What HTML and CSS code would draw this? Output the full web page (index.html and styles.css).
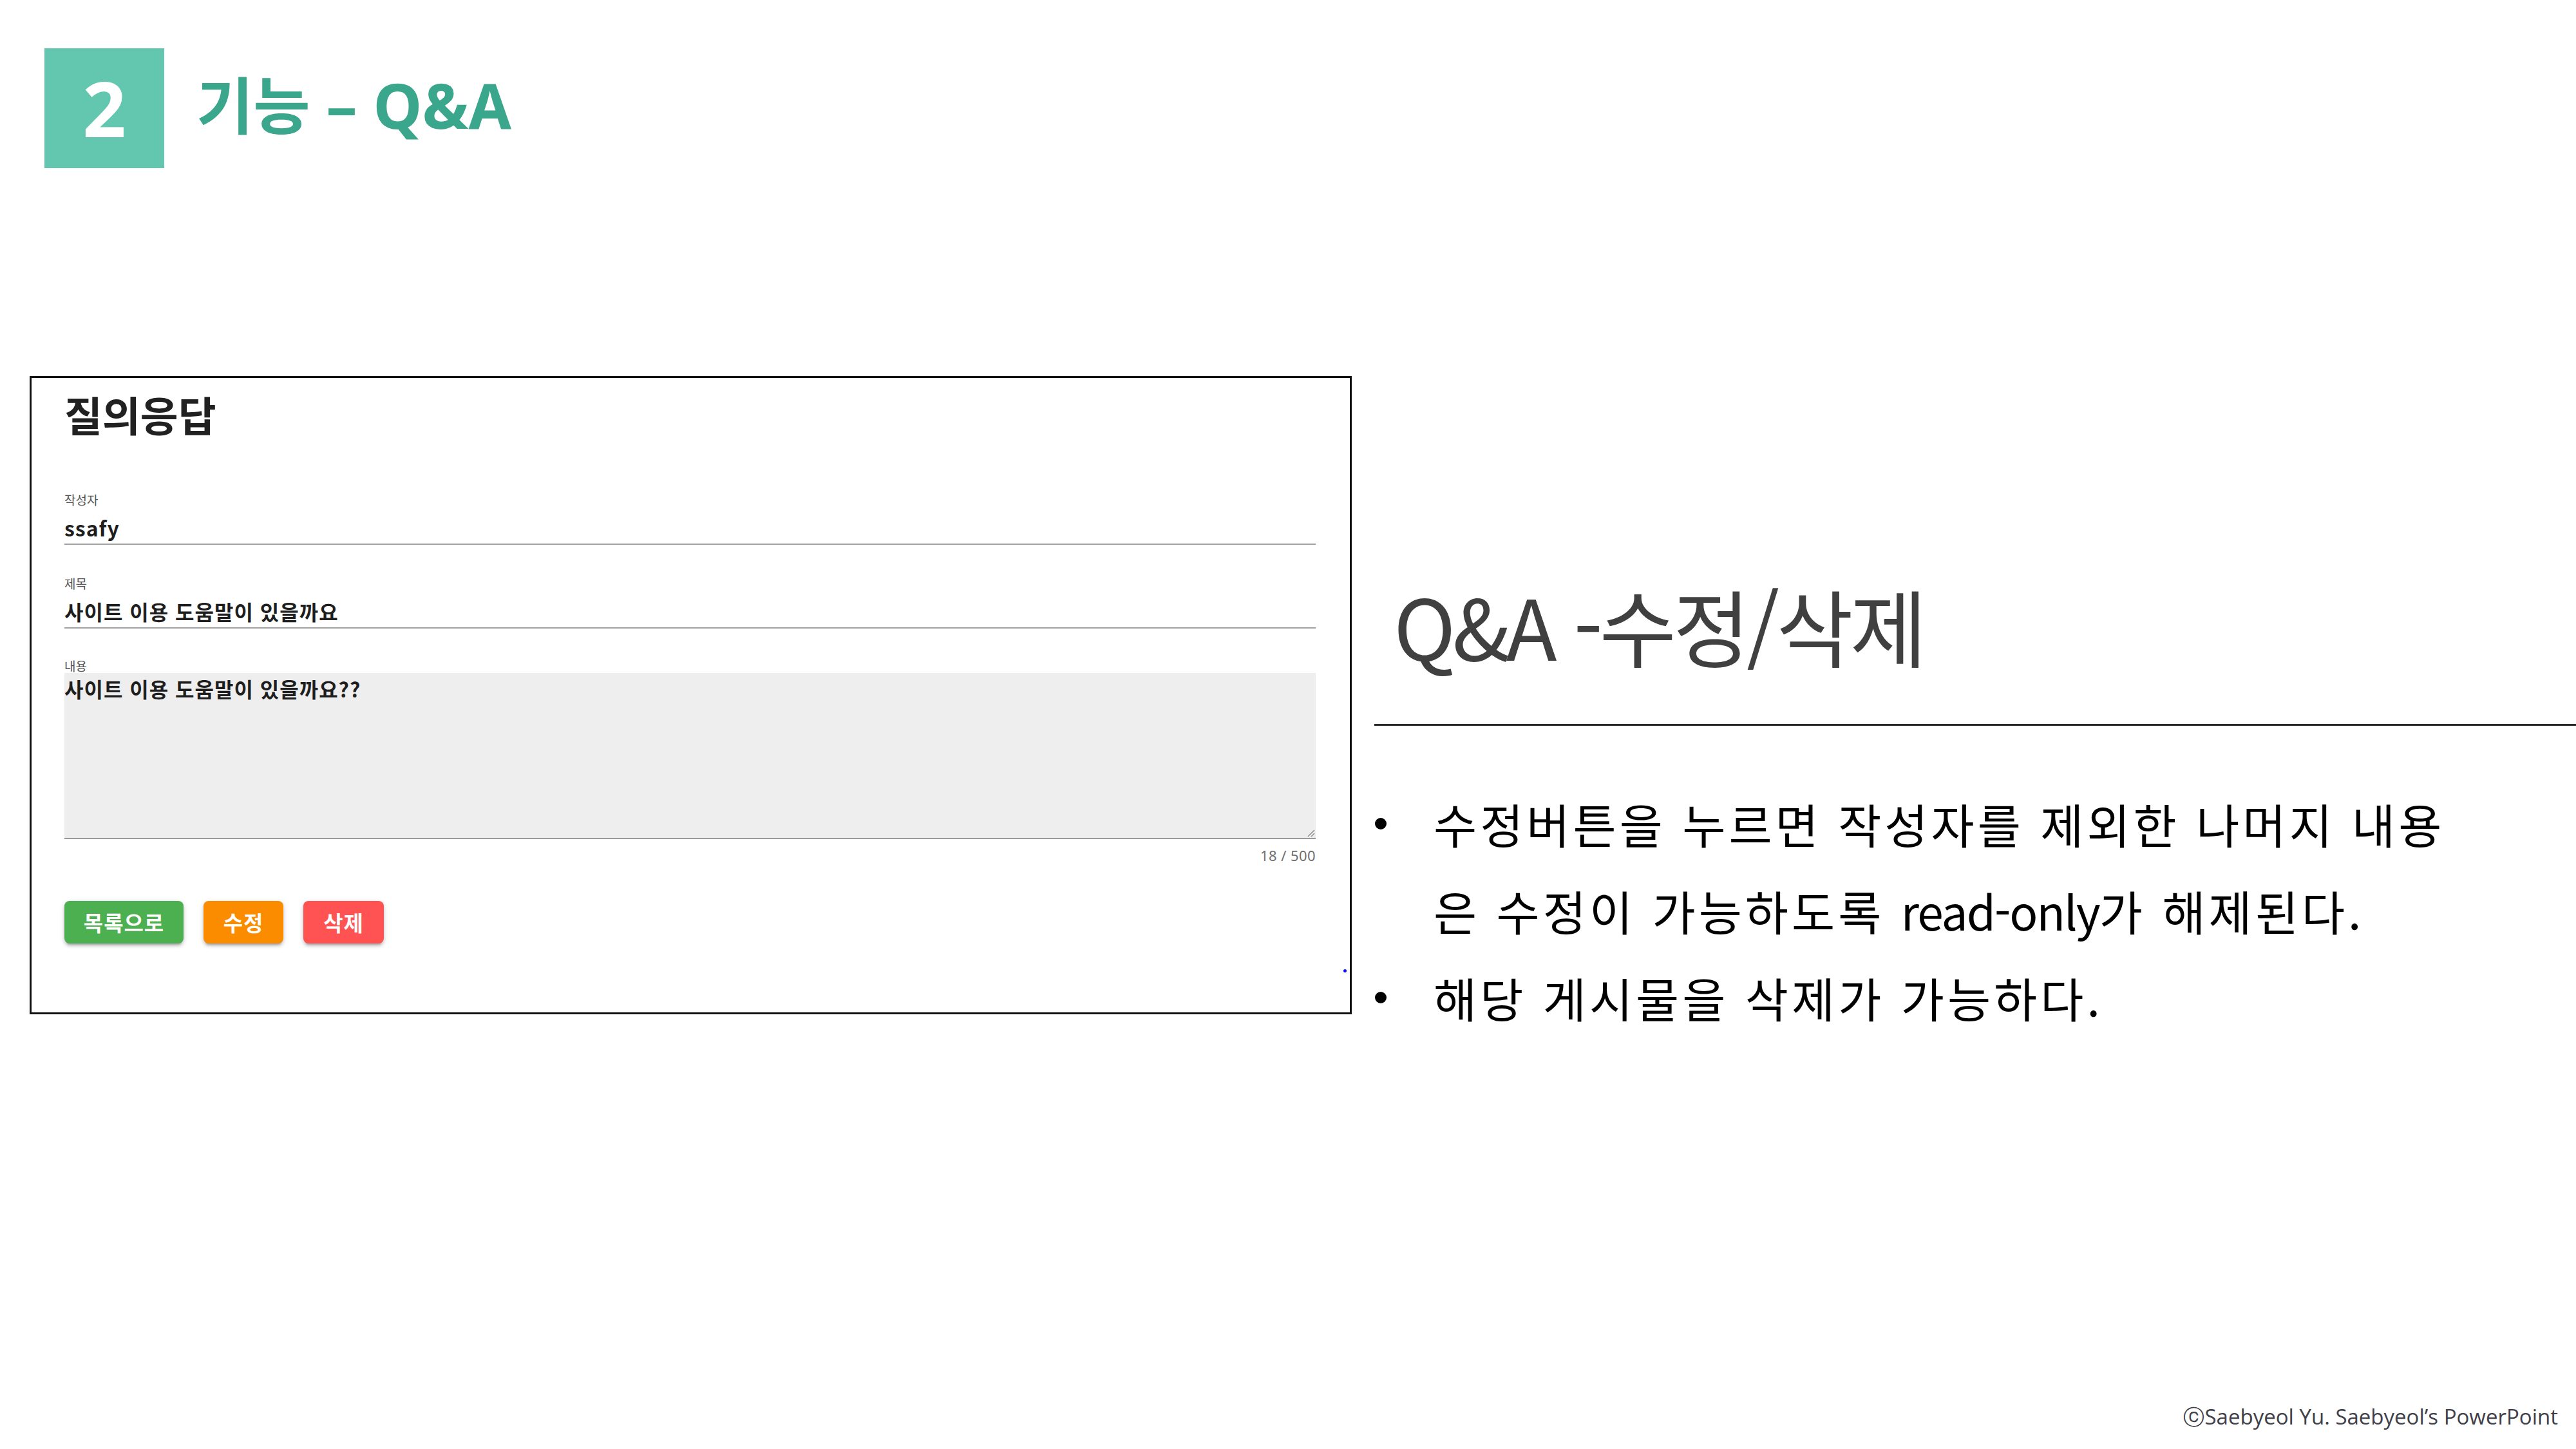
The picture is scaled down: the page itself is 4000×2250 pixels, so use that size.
FILE: index.html
```html
<!DOCTYPE html>
<html lang="ko">
<head>
<meta charset="utf-8">
<title>기능 – Q&amp;A</title>
<link rel="stylesheet" href="styles.css">
</head>
<body>
<div class="slide">
  <header class="slide-header">
    <div class="num-box">2</div>
    <h1 class="slide-title">기능 – Q&amp;A</h1>
  </header>

  <main class="main">
    <section class="card">
      <h2 class="card-title">질의응답</h2>

      <div class="field field-first">
        <div class="field-label">작성자</div>
        <div class="field-value">ssafy</div>
      </div>

      <div class="field">
        <div class="field-label">제목</div>
        <div class="field-value">사이트 이용 도움말이 있을까요</div>
      </div>

      <div class="field field-area">
        <div class="field-label">내용</div>
        <div class="area">
          <div class="area-text">사이트 이용 도움말이 있을까요??</div>
          <svg class="grip" width="14" height="14" viewBox="0 0 14 14"><path d="M13 3 L3 13 M13 8 L8 13" stroke="#8a8a8a" stroke-width="1.4" fill="none"/></svg>
        </div>
        <div class="counter">18 / 500</div>
      </div>

      <div class="buttons">
        <button class="btn btn-green">목록으로</button>
        <button class="btn btn-orange">수정</button>
        <button class="btn btn-red">삭제</button>
      </div>
      <span class="dot-mark"></span>
    </section>

    <section class="desc">
      <h2 class="desc-title">Q&amp;A -수정/삭제</h2>
      <ul class="bullets">
        <li class="bullet">
          <span class="bullet-mark"><span class="bullet-dot"></span></span>
          <span class="bullet-text">수정버튼을 누르면 작성자를 제외한 나머지 내용<br>은 수정이 가능하도록 <span class="latin">read-only</span>가 해제된다.</span>
        </li>
        <li class="bullet">
          <span class="bullet-mark"><span class="bullet-dot"></span></span>
          <span class="bullet-text">해당 게시물을 삭제가 가능하다.</span>
        </li>
      </ul>
    </section>
  </main>

  <footer class="footer">ⓒSaebyeol Yu. Saebyeol’s PowerPoint</footer>
</div>
</body>
</html>
```

FILE: styles.css
```css
html, body {
  margin: 0;
  padding: 0;
  background: #ffffff;
}

.slide {
  width: 4000px;
  height: 2250px;
  display: flex;
  flex-direction: column;
  font-family: "Noto Sans CJK KR", "Noto Sans", sans-serif;
  color: #000;
  box-sizing: border-box;
}

/* ---------- header ---------- */
.slide-header {
  display: flex;
  align-items: center;
  padding: 75px 0 0 69px;
  gap: 50px;
}

.num-box {
  width: 186px;
  height: 186px;
  background: #63c7b0;
  color: #ffffff;
  font-family: "Noto Sans", sans-serif;
  font-weight: 700;
  font-size: 118px;
  line-height: 186px;
  text-align: center;
}

.slide-title {
  margin: 0 0 10px 0;
  font-family: "Noto Sans", "Noto Sans CJK KR", sans-serif;
  font-weight: 700;
  font-size: 96px;
  line-height: 1.2;
  color: #3aa68c;
}

/* ---------- main ---------- */
.main {
  display: flex;
  align-items: flex-start;
  margin-top: 323px;
}

.card {
  position: relative;
  box-sizing: border-box;
  width: 2053px;
  height: 991px;
  margin-left: 46px;
  border: 3px solid #111;
  padding: 18px 53px 0 51px;
  background: #fff;
}

.card-title {
  margin: 0;
  font-size: 64px;
  line-height: 74px;
  font-weight: 700;
  color: #212121;
}

.field {
  margin-top: 49px;
}

.field-first {
  margin-top: 86px;
}

.field-area {
  margin-top: 47px;
}

.field-label {
  font-size: 19px;
  line-height: 22px;
  color: #555;
}

.field-value {
  padding: 12px 0 5px 0;
  font-size: 32px;
  line-height: 40px;
  font-weight: 700;
  letter-spacing: 1px;
  color: #1e1e1e;
  border-bottom: 2px solid #a0a0a0;
}

.area {
  position: relative;
  height: 256px;
  background: #eeeeee;
  border-bottom: 2px solid #9a9a9a;
}

.area-text {
  padding-top: 4px;
  font-size: 32px;
  line-height: 40px;
  font-weight: 700;
  letter-spacing: 1px;
  color: #1e1e1e;
}

.grip {
  position: absolute;
  right: 1px;
  bottom: 1px;
}

.counter {
  margin-top: 15px;
  text-align: right;
  font-family: "Noto Sans", sans-serif;
  font-size: 22px;
  line-height: 20px;
  letter-spacing: 0.02em;
  color: #6e6e6e;
}

.buttons {
  display: flex;
  gap: 31px;
  margin-top: 61px;
}

.btn {
  height: 66px;
  border: none;
  border-radius: 8px;
  padding: 0;
  color: #ffffff;
  font-family: "Noto Sans CJK KR", sans-serif;
  font-weight: 700;
  font-size: 33px;
  letter-spacing: 1px;
  line-height: 66px;
  box-shadow: 0 6px 3px -4px rgba(0,0,0,0.2), 0 4px 5px 0 rgba(0,0,0,0.14), 0 2px 10px 0 rgba(0,0,0,0.12);
}

.btn-green { width: 185px; background: #4caf50; }
.btn-orange { width: 124px; background: #fb8c00; }
.btn-red { width: 125px; background: #ff5252; }

.dot-mark {
  position: absolute;
  left: 2037px;
  top: 918px;
  width: 5px;
  height: 5px;
  border-radius: 50%;
  background: #1010ff;
}

/* ---------- description ---------- */
.desc {
  flex: 1;
  margin-left: 35px;
  margin-top: 307px;
}

.desc-title {
  margin: 0;
  padding: 0 0 77px 30px;
  border-bottom: 3px solid #262626;
  font-family: "Noto Sans CJK KR", sans-serif;
  font-weight: 400;
  font-size: 130px;
  line-height: 156px;
  letter-spacing: -0.04em;
  color: #404040;
}

.bullets {
  list-style: none;
  margin: 84px 0 0 0;
  padding: 0;
}

.bullet {
  display: flex;
  align-items: flex-start;
}

.bullet-mark {
  flex: 0 0 92px;
  height: 135px;
  display: flex;
  align-items: center;
}

.bullet-dot {
  width: 18px;
  height: 18px;
  margin-left: 1px;
  border-radius: 50%;
  background: #000;
}

.bullet-text {
  font-size: 73px;
  line-height: 135px;
  letter-spacing: 5px;
  white-space: nowrap;
  color: #000;
}

.latin {
  letter-spacing: -2px;
}

/* ---------- footer ---------- */
.footer {
  margin-top: auto;
  align-self: flex-end;
  padding: 0 28px 30px 0;
  font-family: "Open Sans", sans-serif;
  font-size: 33px;
  line-height: 40px;
  color: #404048;
}
```
